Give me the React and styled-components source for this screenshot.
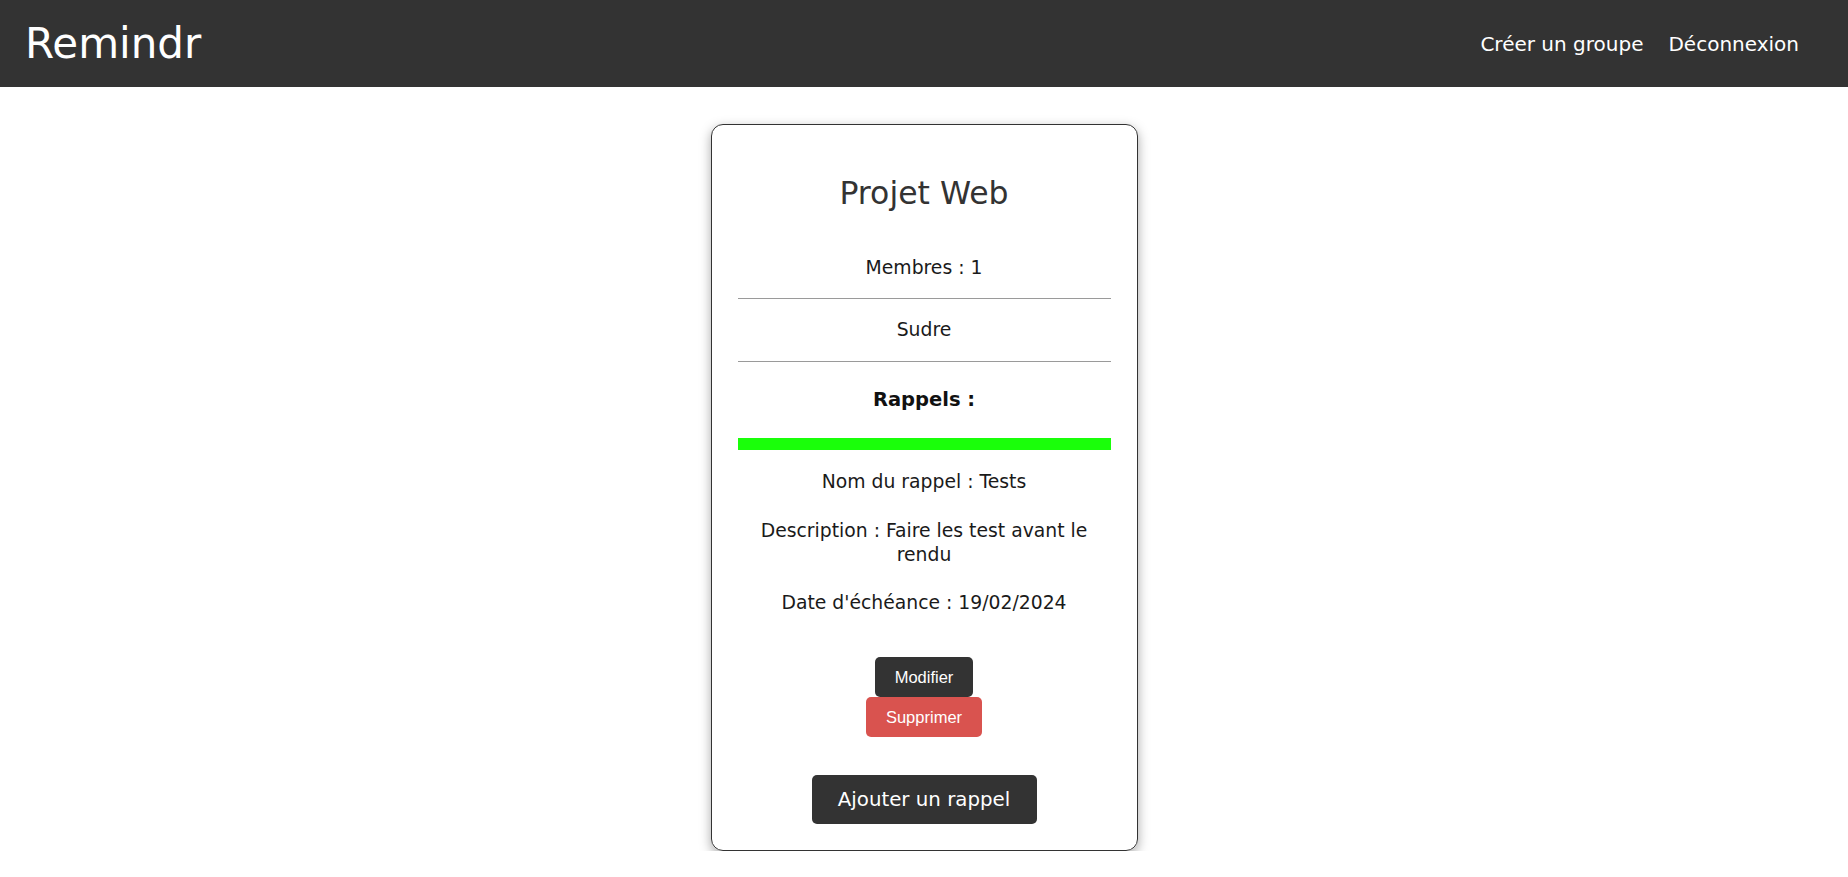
import React from "react";
import styled, { createGlobalStyle } from "styled-components";

const Global = createGlobalStyle`
  html, body { margin: 0; padding: 0; background: #fff; }
  body { font-family: "DejaVu Sans", "Open Sans", sans-serif; color: #1a1a1a; }
  * { box-sizing: border-box; }
`;

const Header = styled.header`
  height: 87px;
  background: #333333;
  display: flex;
  align-items: center;
  justify-content: space-between;
  padding: 0 49px 0 25px;
`;

const Logo = styled.div`
  color: #fff;
  font-size: 42px;
  line-height: 1;
`;

const Nav = styled.nav`
  display: flex;
  gap: 25px;
  align-items: center;
`;

const NavLink = styled.a`
  color: #fff;
  font-size: 20px;
  text-decoration: none;
  cursor: pointer;
`;

const Main = styled.main`
  display: flex;
  justify-content: center;
  padding-top: 37px;
`;

const Card = styled.section`
  width: 427px;
  border: 1px solid #333;
  border-radius: 12px;
  box-shadow: 0 4px 12px rgba(0, 0, 0, 0.35);
  padding: 48px 26px 26px;
  display: flex;
  flex-direction: column;
  align-items: stretch;
  text-align: center;
`;

const Title = styled.h2`
  margin: 0;
  font-size: 31.5px;
  font-weight: 400;
  line-height: 40px;
  color: #333;
`;

const Line = styled.p`
  margin: ${(p) => p.$mt || 0}px 0 0;
  font-size: 18.8px;
  line-height: 24px;
  color: #1a1a1a;
`;

const Rule = styled.hr`
  margin: ${(p) => p.$mt}px 0 0;
  border: none;
  border-top: 1px solid #9a9a9a;
  height: 0;
`;

const Subtitle = styled.h3`
  margin: 24px 0 0;
  font-size: 19.5px;
  font-weight: 600;
  line-height: 28px;
  color: #111;
`;

const StatusBar = styled.div`
  margin-top: 24px;
  height: 12px;
  background: ${(p) => p.$color};
`;

const Actions = styled.div`
  margin-top: 42px;
  display: flex;
  flex-direction: column;
  align-items: center;
`;

const SmallButton = styled.button`
  height: 40px;
  padding: 0 20px;
  border: none;
  border-radius: 5px;
  background: ${(p) => p.$bg};
  color: #fff;
  font-family: "Liberation Sans", Arial, sans-serif;
  font-size: 16.5px;
  cursor: pointer;
`;

const BigButton = styled.button`
  align-self: center;
  margin-top: 38px;
  height: 49px;
  width: 225px;
  border: none;
  border-radius: 5px;
  background: #333;
  color: #fff;
  font-family: "DejaVu Sans", "Open Sans", sans-serif;
  font-size: 19.8px;
  cursor: pointer;
`;

export default function App() {
  return (
    <>
      <Global />
      <Header>
        <Logo>Remindr</Logo>
        <Nav>
          <NavLink>Créer un groupe</NavLink>
          <NavLink>Déconnexion</NavLink>
        </Nav>
      </Header>
      <Main>
        <Card>
          <Title>Projet Web</Title>
          <Line $mt={43}>Membres : 1</Line>
          <Rule $mt={18} />
          <Line $mt={19}>Sudre</Line>
          <Rule $mt={19} />
          <Subtitle>Rappels :</Subtitle>
          <StatusBar $color="#1aff0a" />
          <Line $mt={20}>Nom du rappel : Tests</Line>
          <Line $mt={25}>Description : Faire les test avant le rendu</Line>
          <Line $mt={24}>Date d'échéance : 19/02/2024</Line>
          <Actions>
            <SmallButton $bg="#333">Modifier</SmallButton>
            <SmallButton $bg="#d9534f">Supprimer</SmallButton>
          </Actions>
          <BigButton>Ajouter un rappel</BigButton>
        </Card>
      </Main>
    </>
  );
}
